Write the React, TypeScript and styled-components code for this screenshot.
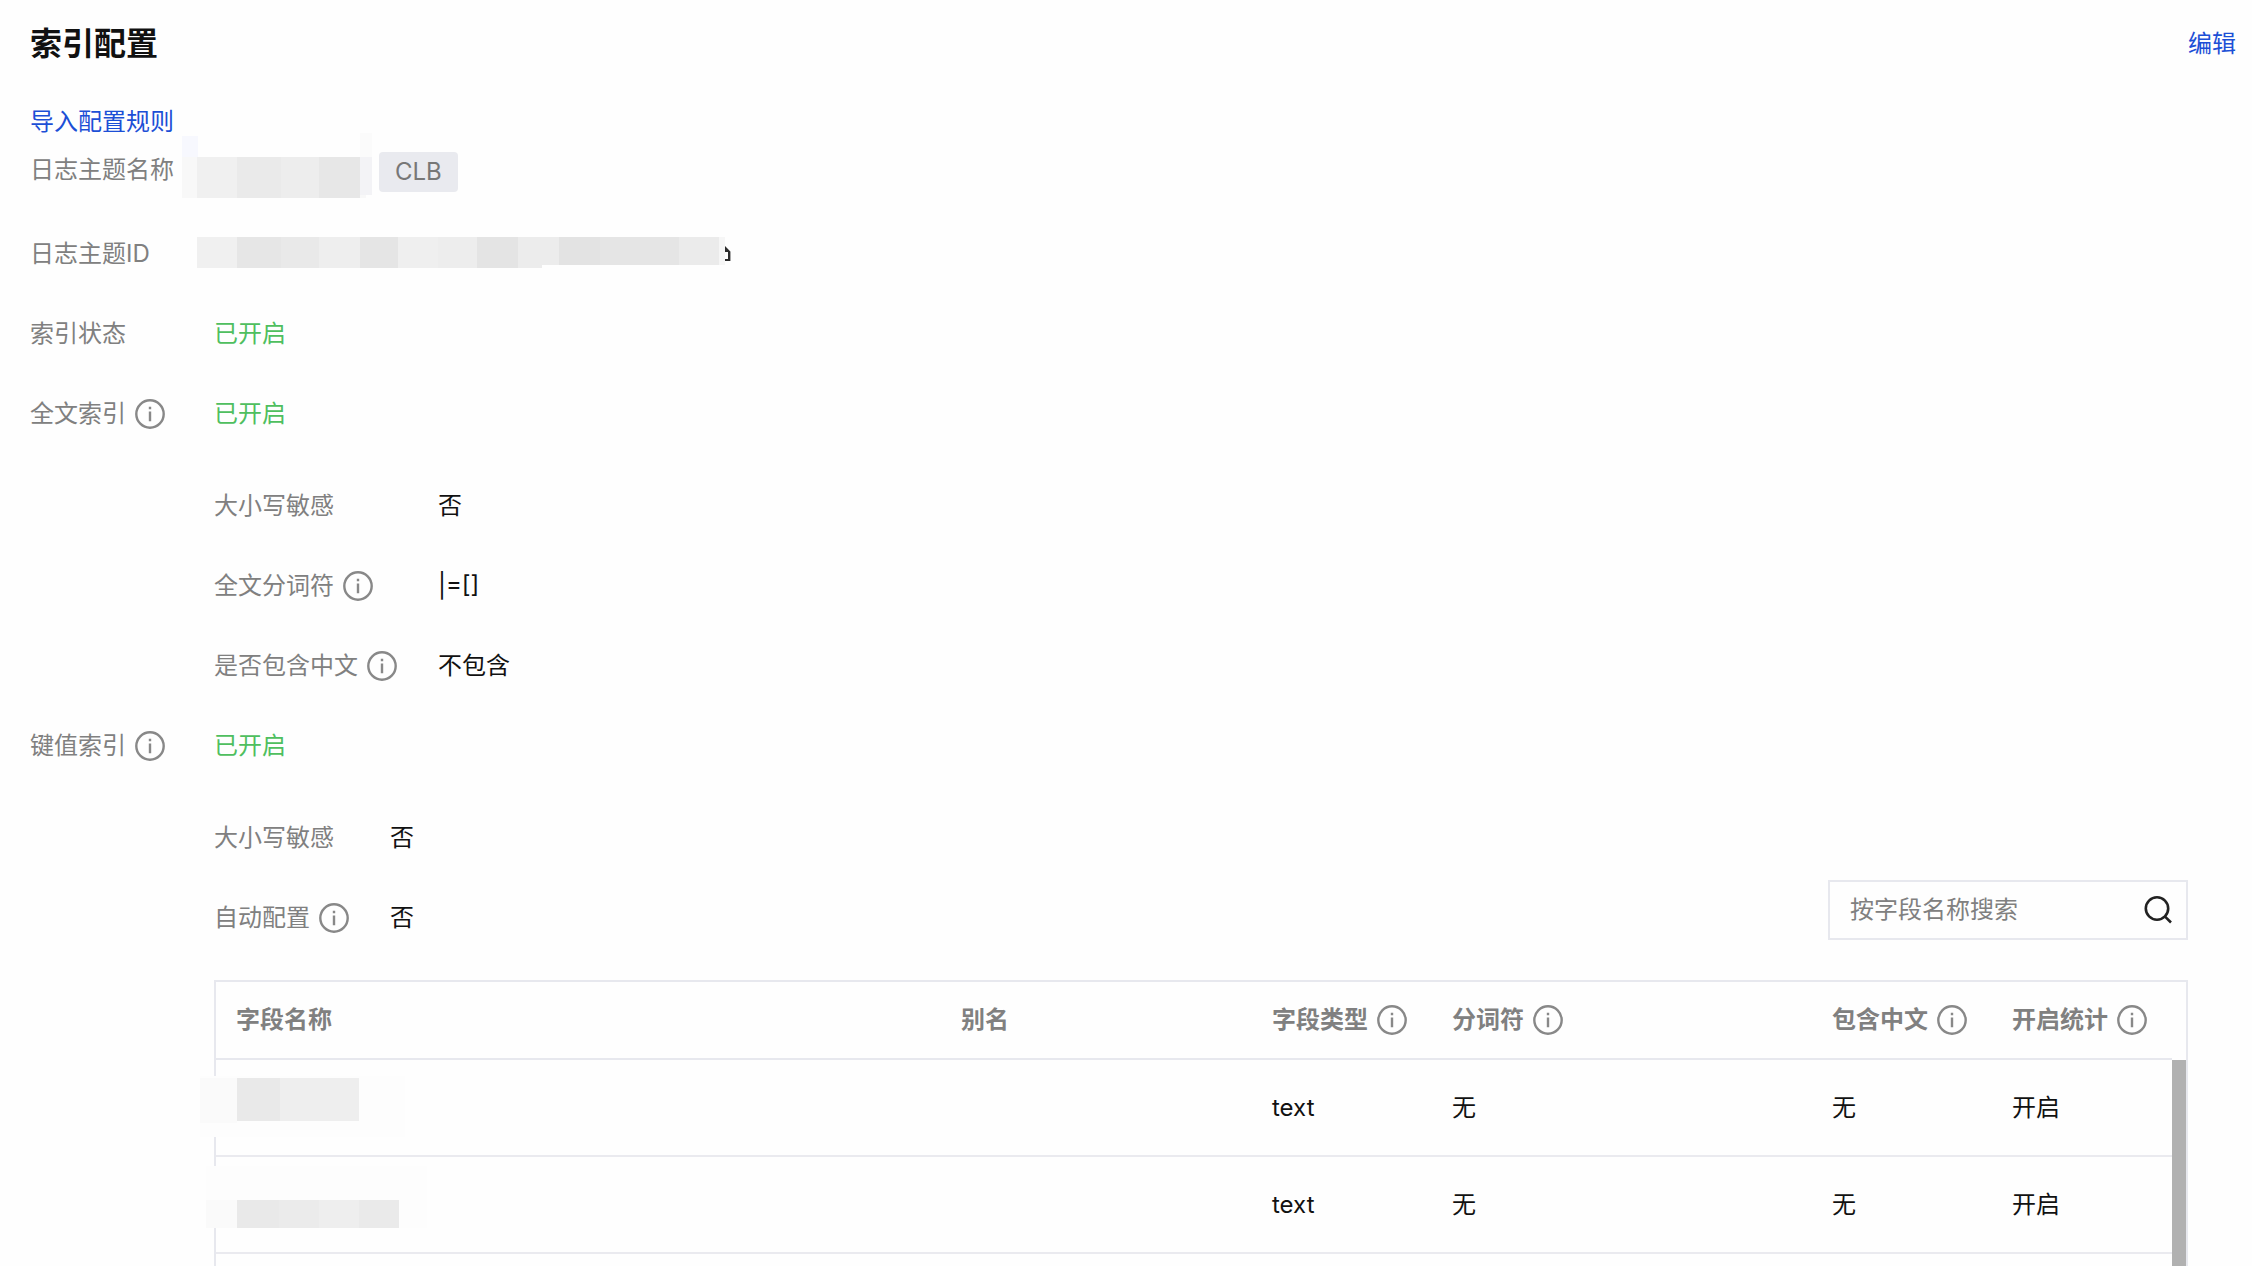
import React from "react";
import styled, { createGlobalStyle } from "styled-components";

const Global = createGlobalStyle`
  * { box-sizing: border-box; }
  body {
    margin: 0;
    background: #fefefe;
    color: #111;
    font: 24px/40px Inter, "Noto Sans CJK SC", sans-serif;
  }
`;

const Page = styled.main`
  height: 100vh;
  overflow: hidden;
  padding: 24px 16px 0 30px;
`;

const Header = styled.header`
  display: flex;
  align-items: center;
  justify-content: space-between;
`;

const Title = styled.h1`
  margin: 0;
  font-size: 32px;
  line-height: 40px;
  font-weight: 700;
`;

const Link = styled.a`
  color: #1c4fd6;
  text-decoration: none;
`;

const ImportLine = styled.div`
  margin-top: 38px;
`;

const Fields = styled.dl`
  display: grid;
  grid-template-columns: 184px minmax(0, 1fr);
  row-gap: 40px;
  margin: 8px 0 0;
`;

const Label = styled.dt`
  display: flex;
  align-items: center;
  gap: 8px;
  height: 40px;
  color: #808080;
  white-space: nowrap;
`;

const Value = styled.dd<{ $on?: boolean; $tall?: boolean }>`
  display: flex;
  align-items: center;
  position: relative;
  height: ${(p) => (p.$tall ? 44 : 40)}px;
  margin: 0;
  color: ${(p) => (p.$on ? "#4fbf5f" : "#111")};
`;

const Nested = styled.div`
  grid-column: 2;
  padding-top: 12px;
`;

const SubFields = styled.dl<{ $label: number }>`
  display: grid;
  grid-template-columns: ${(p) => p.$label}px minmax(0, 1fr);
  row-gap: 40px;
  margin: 0;
`;

const Badge = styled.span`
  margin-left: 165px;
  padding: 0 16px;
  border-radius: 4px;
  background: #e9eaef;
  color: #777;
`;

const Toolbar = styled.div`
  display: flex;
  align-items: flex-start;
  padding-right: 48px;
`;

const ToolbarFields = styled.div`
  flex: 1;
  padding-bottom: 2px;
`;

const Search = styled.label`
  display: flex;
  align-items: center;
  align-self: flex-end;
  width: 360px;
  height: 60px;
  padding: 0 12px 0 20px;
  border: 2px solid #e7e8ee;
`;

const SearchInput = styled.input`
  flex: 1;
  min-width: 0;
  padding: 0;
  border: 0;
  outline: 0;
  background: transparent;
  color: #111;
  font: inherit;
  &::placeholder { color: #808080; opacity: 1; }
`;

const TableFrame = styled.div`
  display: flex;
  height: 560px;
  margin: 40px 48px 0 0;
  border: 2px solid #e7e8ee;
`;

const Table = styled.table`
  flex: 1;
  align-self: flex-start;
  min-width: 0;
  table-layout: fixed;
  border-collapse: separate;
  border-spacing: 0;
  text-align: left;
`;

const Th = styled.th`
  height: 78px;
  padding: 0 0 0 20px;
  border-bottom: 2px solid #e7e8ee;
  color: #808080;
  font-weight: 700;
`;

const Td = styled.td`
  position: relative;
  height: 97px;
  padding: 0 0 0 20px;
  border-bottom: 2px solid #eaeaef;
`;

const HeadCell = styled.span`
  display: flex;
  align-items: center;
  gap: 8px;
  white-space: nowrap;
`;

const ScrollThumb = styled.div`
  width: 14px;
  margin-top: 78px;
  background: #b1b1b1;
`;

const Mask = styled.svg<{ $left: number; $top: number }>`
  position: absolute;
  left: ${(p) => p.$left}px;
  top: ${(p) => p.$top}px;
`;

const CopyButton = styled.button`
  display: flex;
  margin-left: 511px;
  padding: 0;
  border: 0;
  background: none;
  cursor: pointer;
`;

type Block = [x: number, y: number, w: number, h: number, fill: string];

function Mosaic({ left, top, width, height, blocks }: {
  left: number; top: number; width: number; height: number; blocks: Block[];
}) {
  return (
    <Mask $left={left} $top={top} width={width} height={height} aria-hidden="true">
      {blocks.map(([x, y, w, h, fill], i) => (
        <rect key={i} x={x} y={y} width={w} height={h} fill={fill} />
      ))}
    </Mask>
  );
}

const InfoIcon = () => (
  <svg width="32" height="32" viewBox="0 0 32 32" fill="none" aria-hidden="true">
    <circle cx="16" cy="16" r="13.7" stroke="#888" strokeWidth="2.4" />
    <path d="M16 13.4v9.8M16 8.8v2.4" stroke="#888" strokeWidth="2.4" />
  </svg>
);

const SearchIcon = () => (
  <svg width="32" height="32" viewBox="0 0 32 32" fill="none" aria-hidden="true">
    <circle cx="15" cy="14.5" r="11.2" stroke="#222" strokeWidth="2.6" />
    <path d="M22.8 22.3l6.2 6.2" stroke="#222" strokeWidth="2.6" />
  </svg>
);

const CopyIcon = () => (
  <svg width="6" height="18" viewBox="0 0 6 18" fill="none" aria-hidden="true">
    <path d="M0 1v6h3v7H0v2h5.4V6.4z" fill="#2b2b2b" />
  </svg>
);

const nameBlocks: Block[] = [
  [0, 3, 16, 21, "#f7f8fe"], [178, 0, 12, 24, "#fbfbfb"],
  [0, 24, 16, 41, "#f8f8f8"], [15, 24, 40, 41, "#f0f0f0"], [55, 24, 44, 41, "#eaeaea"],
  [99, 24, 38, 41, "#ededed"], [137, 24, 41, 41, "#e7e7e7"], [178, 24, 12, 38, "#f3f3f6"],
  [178, 62, 6, 3, "#f8f8f8"],
];

const idBlocks: Block[] = [
  [0, 0, 40, 31, "#f0f0f0"], [40, 0, 44, 31, "#e6e6e6"], [84, 0, 38, 31, "#e9e9e9"],
  [122, 0, 41, 31, "#eeeeee"], [163, 0, 38, 31, "#e5e5e5"], [201, 0, 40, 31, "#efefef"],
  [241, 0, 39, 31, "#ededed"], [280, 0, 41, 31, "#e4e4e4"], [321, 0, 24, 31, "#ececec"],
  [345, 0, 17, 28, "#ececec"], [362, 0, 41, 28, "#e3e3e3"], [403, 0, 79, 28, "#e5e5e5"],
  [482, 0, 40, 28, "#ebebeb"], [522, 0, 6, 28, "#f6f6f6"],
];

const rows = [
  {
    top: 16, left: -16, width: 205, height: 61,
    blocks: [
      [0, 0, 205, 61, "#fdfdfd"], [0, 2, 37, 45, "#fafafa"], [37, 2, 43, 43, "#e9e9e9"],
      [80, 2, 79, 43, "#eeeeee"],
    ] as Block[],
  },
  {
    top: 9, left: -10, width: 221, height: 62,
    blocks: [
      [0, 0, 221, 62, "#fdfdfd"], [0, 34, 31, 28, "#fafafa"], [31, 34, 42, 28, "#e9e9e9"],
      [73, 34, 40, 28, "#ebebeb"], [113, 34, 40, 28, "#eeeeee"], [153, 34, 40, 28, "#eaeaea"],
    ] as Block[],
  },
];

export default function App() {
  return (
    <>
      <Global />
      <Page>
        <Header>
          <Title>索引配置</Title>
          <Link href="#edit">编辑</Link>
        </Header>
        <ImportLine><Link href="#import">导入配置规则</Link></ImportLine>
        <Fields>
          <Label>日志主题名称</Label>
          <Value $tall>
            <Mosaic left={-32} top={-17} width={190} height={65} blocks={nameBlocks} />
            <Badge>CLB</Badge>
          </Value>
          <Label>日志主题ID</Label>
          <Value>
            <Mosaic left={-17} top={3} width={528} height={31} blocks={idBlocks} />
            <CopyButton type="button" aria-label="复制"><CopyIcon /></CopyButton>
          </Value>
          <Label>索引状态</Label>
          <Value $on>已开启</Value>
          <Label>全文索引 <InfoIcon /></Label>
          <Value $on>已开启</Value>
          <Nested>
            <SubFields $label={224}>
              <Label>大小写敏感</Label>
              <Value>否</Value>
              <Label>全文分词符 <InfoIcon /></Label>
              <Value>|=[]</Value>
              <Label>是否包含中文 <InfoIcon /></Label>
              <Value>不包含</Value>
            </SubFields>
          </Nested>
          <Label>键值索引 <InfoIcon /></Label>
          <Value $on>已开启</Value>
          <Nested>
            <Toolbar>
              <ToolbarFields>
                <SubFields $label={176}>
                  <Label>大小写敏感</Label>
                  <Value>否</Value>
                  <Label>自动配置 <InfoIcon /></Label>
                  <Value>否</Value>
                </SubFields>
              </ToolbarFields>
              <Search>
                <SearchInput type="text" placeholder="按字段名称搜索" aria-label="按字段名称搜索" />
                <SearchIcon />
              </Search>
            </Toolbar>
            <TableFrame>
              <Table>
                <colgroup>
                  <col />
                  <col style={{ width: 311 }} />
                  <col style={{ width: 180 }} />
                  <col style={{ width: 380 }} />
                  <col style={{ width: 180 }} />
                  <col style={{ width: 180 }} />
                </colgroup>
                <thead>
                  <tr>
                    <Th scope="col">字段名称</Th>
                    <Th scope="col">别名</Th>
                    <Th scope="col"><HeadCell>字段类型 <InfoIcon /></HeadCell></Th>
                    <Th scope="col"><HeadCell>分词符 <InfoIcon /></HeadCell></Th>
                    <Th scope="col"><HeadCell>包含中文 <InfoIcon /></HeadCell></Th>
                    <Th scope="col"><HeadCell>开启统计 <InfoIcon /></HeadCell></Th>
                  </tr>
                </thead>
                <tbody>
                  {rows.map((row, i) => (
                    <tr key={i}>
                      <Td><Mosaic {...row} /></Td>
                      <Td />
                      <Td>text</Td>
                      <Td>无</Td>
                      <Td>无</Td>
                      <Td>开启</Td>
                    </tr>
                  ))}
                </tbody>
              </Table>
              <ScrollThumb />
            </TableFrame>
          </Nested>
        </Fields>
      </Page>
    </>
  );
}
